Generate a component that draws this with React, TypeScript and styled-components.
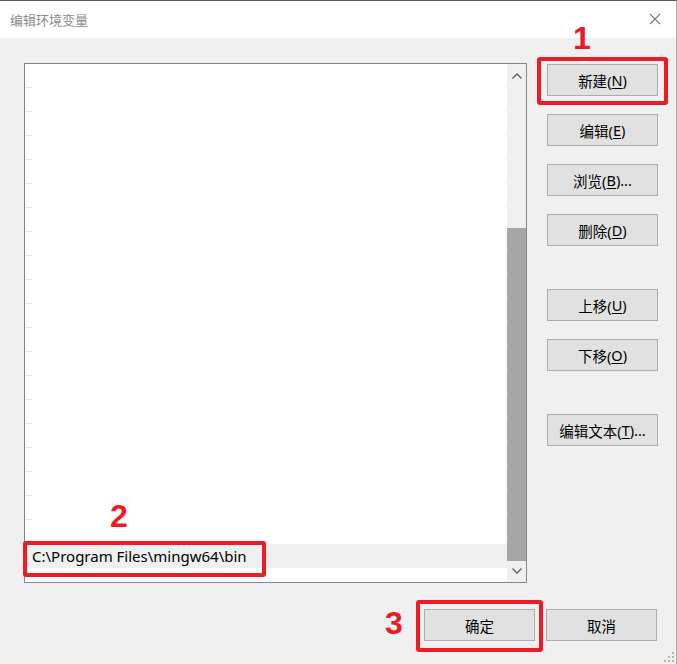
import React from 'react';
import styled, { createGlobalStyle } from 'styled-components';

const GlobalStyle = createGlobalStyle`
  html, body {
    margin: 0;
    padding: 0;
    background: #f0f0f0;
  }
  * {
    box-sizing: border-box;
  }
`;

const FONT = `"Noto Sans", "Noto Sans CJK SC", sans-serif`;
const RED = '#ec1c24';

const ROW_COUNT = 21;
const SELECTED_ROW = 20;

type ButtonDef = { label: string, key: string, suffix?: string, spaced?: boolean };

const sideButtons: ButtonDef[] = [
  { label: '新建', key: 'N' },
  { label: '编辑', key: 'E' },
  { label: '浏览', key: 'B', suffix: '...' },
  { label: '删除', key: 'D' },
  { label: '上移', key: 'U', spaced: true },
  { label: '下移', key: 'O' },
  { label: '编辑文本', key: 'T', suffix: '...', spaced: true },
];

const Chevron = ({ up }: { up: boolean }) => (
  <svg width="10" height="6" viewBox="0 0 10 6">
    <polyline
      points={up ? '0.5,5.5 5,1 9.5,5.5' : '0.5,0.5 5,5 9.5,0.5'}
      fill="none"
      stroke="#606060"
      strokeWidth="1.4"
    />
  </svg>
);

export default function App() {
  return (
    <Window>
      <GlobalStyle />
      <TitleBar>
        <Title>编辑环境变量</Title>
        <CloseButton>
          <svg width="12" height="12" viewBox="0 0 12 12">
            <path d="M1 1 L11 11 M11 1 L1 11" stroke="#7a7a7a" strokeWidth="1.1" />
          </svg>
        </CloseButton>
      </TitleBar>

      <Body>
        <ListBox>
          <Rows>
            {Array.from({ length: ROW_COUNT }).map((_, i) => (
              <Row key={i} selected={i === SELECTED_ROW}>
                {i === SELECTED_ROW ? 'C:\\Program Files\\mingw64\\bin' : ''}
              </Row>
            ))}
          </Rows>
          <ScrollBar>
            <ArrowBox><Chevron up /></ArrowBox>
            <Track>
              <Thumb />
            </Track>
            <ArrowBox><Chevron up={false} /></ArrowBox>
          </ScrollBar>
        </ListBox>

        <ButtonColumn>
          {sideButtons.map((b) => (
            <DlgButton key={b.label} spaced={b.spaced}>
              {b.label}(<u>{b.key}</u>){b.suffix}
            </DlgButton>
          ))}
        </ButtonColumn>
      </Body>

      <Footer>
        <DlgButton>确定</DlgButton>
        <DlgButton>取消</DlgButton>
      </Footer>

      <Grip>
        <svg width="12" height="12" viewBox="0 0 12 12">
          {[[10, 2], [10, 6], [6, 6], [10, 10], [6, 10], [2, 10]].map(([x, y], i) => (
            <rect key={i} x={x - 1} y={y - 1} width="2" height="2" fill="#b8b8b8" />
          ))}
        </svg>
      </Grip>

      <Callout style={{ left: 537, top: 56, width: 131, height: 48 }} />
      <Callout style={{ left: 23, top: 540, width: 243, height: 36 }} />
      <Callout style={{ left: 416, top: 599, width: 127, height: 52 }} />
      <StepNumber style={{ left: 573, top: 21 }}>1</StepNumber>
      <StepNumber style={{ left: 110, top: 499 }}>2</StepNumber>
      <StepNumber style={{ left: 385, top: 606 }}>3</StepNumber>
    </Window>
  );
}

const Window = styled.div`
  position: relative;
  width: 677px;
  height: 664px;
  background: #f0f0f0;
  border-top: 1px solid #5a5a5a;
  border-right: 1px solid #aaaaaa;
  font-family: ${FONT};
  color: #000;
  overflow: hidden;
`;

const TitleBar = styled.div`
  height: 37px;
  background: #ffffff;
  display: flex;
  align-items: center;
  justify-content: space-between;
  padding: 0 15px 0 10px;
`;

const Title = styled.div`
  font-size: 13px;
  color: #8c8c8c;
  margin-top: -1px;
`;

const CloseButton = styled.div`
  display: flex;
  align-items: center;
  margin-top: -1px;
`;

const Body = styled.div`
  display: grid;
  grid-template-columns: 503px 111px;
  column-gap: 20px;
  padding: 25px 0 0 24px;
`;

const ListBox = styled.div`
  height: 520px;
  background: #ffffff;
  border: 1px solid #82878f;
  display: flex;
  overflow: hidden;
`;

const Rows = styled.div`
  flex: 1;
  display: flex;
  flex-direction: column;
`;

const Row = styled.div<{ selected: boolean }>`
  position: relative;
  height: 24px;
  flex-shrink: 0;
  padding-left: 7px;
  font-size: 15px;
  line-height: 24px;
  white-space: nowrap;
  background: ${(props) => props.selected ? '#f0f0f0' : '#ffffff'};

  &::before {
    content: '';
    position: absolute;
    left: 1px;
    bottom: 0;
    width: 6px;
    height: 1px;
    background: ${(props) => props.selected ? 'transparent' : '#e6e6e6'};
  }

  &::after {
    content: '';
    position: absolute;
    right: 1px;
    bottom: 0;
    width: 1px;
    height: 1px;
    background: ${(props) => props.selected ? 'transparent' : '#e6e6e6'};
  }
`;

const ScrollBar = styled.div`
  width: 19px;
  background: #f0f0f0;
  display: flex;
  flex-direction: column;
  padding: 3px 0 3px 0;
`;

const ArrowBox = styled.div`
  height: 17px;
  display: flex;
  align-items: center;
  justify-content: center;
`;

const Track = styled.div`
  flex: 1;
  display: flex;
  flex-direction: column;
  justify-content: flex-end;
`;

const Thumb = styled.div`
  height: 333px;
  margin: 0 0 1px 0;
  background: #a6a6a6;
`;

const ButtonColumn = styled.div`
  display: flex;
  flex-direction: column;
  gap: 18px;
  padding-top: 1px;
`;

const DlgButton = styled.div<{ spaced?: boolean }>`
  width: 111px;
  height: 32px;
  margin-top: ${(props) => props.spaced ? '25px' : '0'};
  background: #e1e1e1;
  border: 1px solid #adadad;
  display: flex;
  align-items: center;
  justify-content: center;
  font-size: 14.5px;
  white-space: nowrap;

  u {
    text-underline-offset: 2px;
  }
`;

const Footer = styled.div`
  display: flex;
  justify-content: flex-end;
  gap: 11px;
  padding: 26px 19px 0 0;
`;

const Grip = styled.div`
  position: absolute;
  right: 1px;
  bottom: 1px;
  display: flex;
`;

const Callout = styled.div`
  position: absolute;
  border: 4px solid ${RED};
  border-radius: 3px;
`;

const StepNumber = styled.div`
  position: absolute;
  font-family: "Liberation Sans", Arial, sans-serif;
  font-weight: bold;
  font-size: 32px;
  line-height: 1;
  color: ${RED};
`;
